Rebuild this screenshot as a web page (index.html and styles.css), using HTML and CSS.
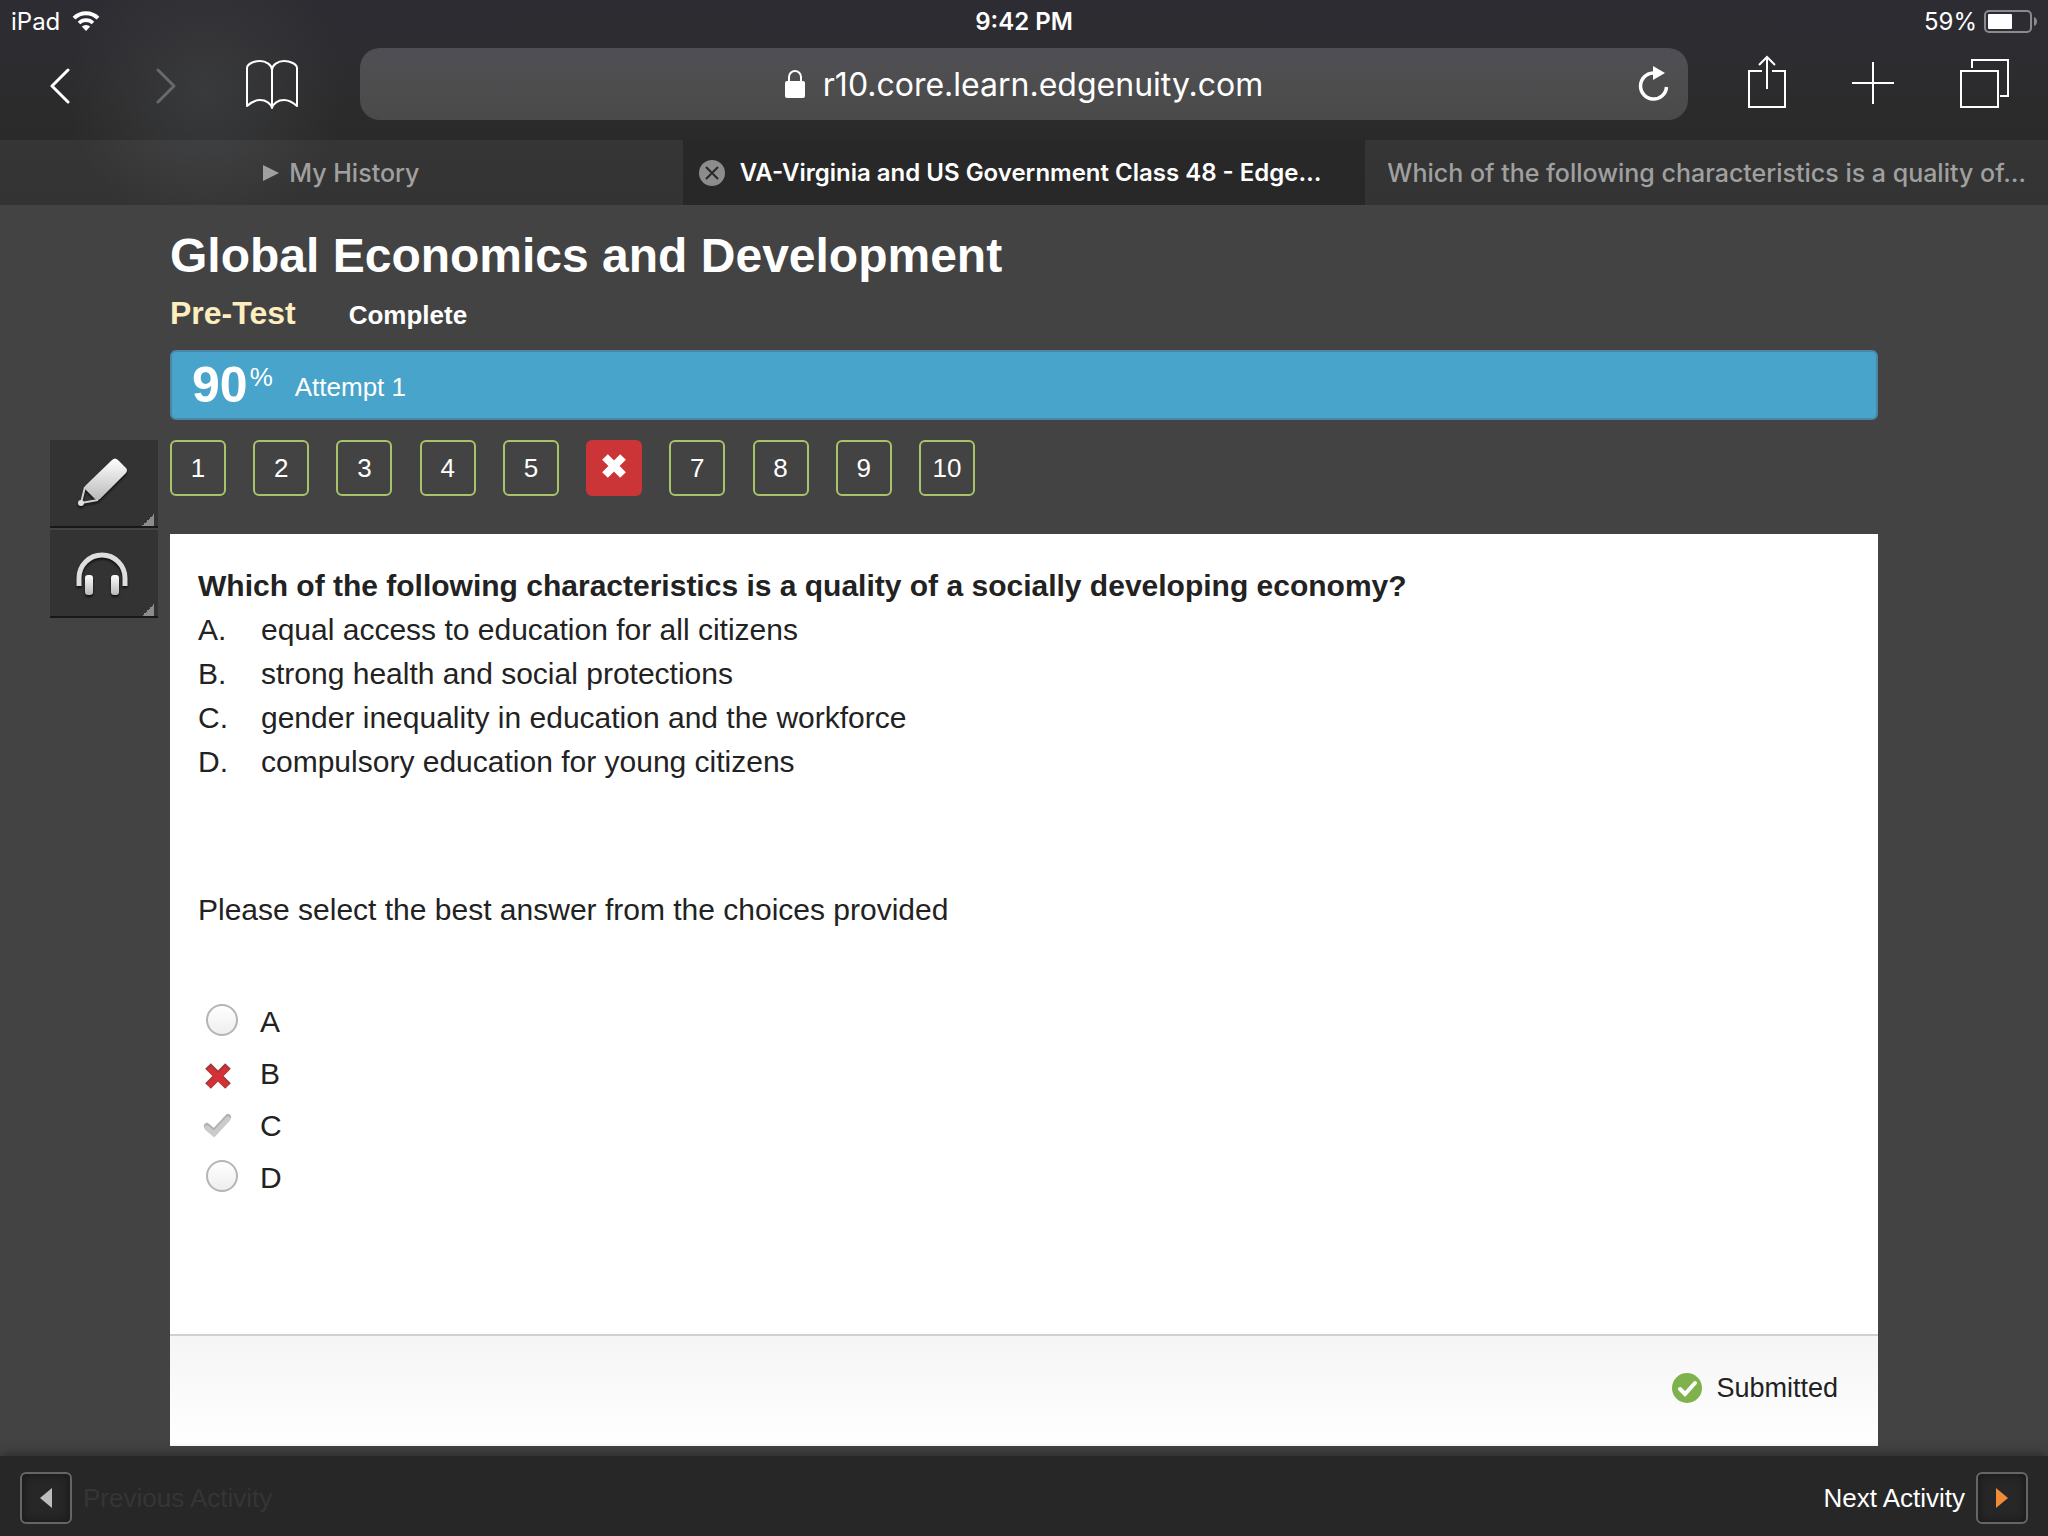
FILE: index.html
```html
<!DOCTYPE html>
<html lang="en">
<head>
<meta charset="utf-8">
<meta name="viewport" content="width=device-width, initial-scale=1">
<title>VA-Virginia and US Government Class 48 - Edgenuity</title>
<link rel="stylesheet" href="styles.css">
</head>
<body>
<header class="browser">
  <div class="status">
    <div class="status-side">
      <span>iPad</span>
      <svg width="28" height="20" viewBox="0 0 28 20" fill="none" aria-hidden="true">
        <path d="M2 7.200 A17 17 0 0 1 26 7.200" stroke="#fff" stroke-width="4"/>
        <path d="M7 12 A10 10 0 0 1 21 12" stroke="#fff" stroke-width="3.600"/>
        <path d="M14 20 L9.800 15.600 A6 6 0 0 1 18.200 15.600 Z" fill="#fff"/>
      </svg>
    </div>
    <time class="clock">9:42 PM</time>
    <div class="status-side status-right">
      <span>59%</span>
      <svg width="53" height="23" viewBox="0 0 53 23" aria-hidden="true">
        <rect x="1" y="1" width="46" height="21" rx="4" fill="none" stroke="#8b8a8e" stroke-width="2"/>
        <rect x="4" y="4" width="24" height="15" rx="1" fill="#fff"/>
        <path d="M50 7 Q53 8 53 11.500 Q53 15 50 16 Z" fill="#8b8a8e"/>
      </svg>
    </div>
  </div>
  <div class="toolbar">
    <nav class="history" aria-label="Browser history">
      <button class="tool" aria-label="Back"><svg width="20" height="40" viewBox="0 0 20 40" fill="none" stroke="#fff" stroke-width="3" stroke-linecap="round" stroke-linejoin="round"><path d="M18 6 L2 22 L18 38"/></svg></button>
      <button class="tool" aria-label="Forward" disabled><svg width="20" height="40" viewBox="0 0 20 40" fill="none" stroke="#68696b" stroke-width="3" stroke-linecap="round" stroke-linejoin="round"><path d="M2 6 L18 22 L2 38"/></svg></button>
      <button class="tool" aria-label="Bookmarks"><svg width="52" height="52" viewBox="0 -2 52 52" fill="none" stroke="#fff" stroke-width="2" stroke-linejoin="round"><path d="M26 48 V10 C26 5 20 1 14 1 C8 1 1 4 1 8 V46 C5 42.500 9 40 14 40 C20 40 25 43.500 26 48 C27 43.500 32 40 38 40 C43 40 47 42.500 51 46 V8 C51 4 44 1 38 1 C32 1 26 5 26 10"/></svg></button>
    </nav>
    <div class="address">
      <label class="address-text">
        <svg width="20" height="28" viewBox="0 0 20 28" aria-label="Secure"><rect x="0" y="11" width="20" height="17" rx="2" fill="#fff"/><path d="M4 12 V7 A6 6 0 0 1 16 7 V12" fill="none" stroke="#fff" stroke-width="2"/></svg>
        <input class="url" type="text" value="r10.core.learn.edgenuity.com" aria-label="Address">
      </label>
      <button class="tool" aria-label="Reload"><svg width="32" height="36" viewBox="0 0 32 36"><path d="M15 7 A13 13 0 1 0 28.500 21" fill="none" stroke="#fff" stroke-width="3.500"/><path d="M15 0 L27 7 L15 14 Z" fill="#fff"/></svg></button>
    </div>
    <div class="actions">
      <button class="tool" aria-label="Share"><svg width="38" height="58" viewBox="0 0 38 58" fill="none" stroke="#fff" stroke-width="2"><path d="M14 16 H1 V52 H37 V16 H24 M19 34 V2 M11 10 L19 2 L27 10"/></svg></button>
      <button class="tool" aria-label="New tab"><svg width="42" height="44" viewBox="0 0 42 44" stroke="#fff" stroke-width="2"><path d="M21 0 V42 M0 21 H42"/></svg></button>
      <button class="tool" aria-label="Show tabs"><svg width="50" height="50" viewBox="0 0 50 50" fill="none" stroke="#fff" stroke-width="2"><path d="M1 12 H38 V48 H1 Z M12 9 V1 H48 V37 H40"/></svg></button>
    </div>
  </div>
  <nav class="tabs" aria-label="Open tabs">
    <a class="tab" href="#history"><svg width="16" height="16" viewBox="0 0 16 16" fill="#a0a0a0" aria-hidden="true"><path d="M0 0 L16 8 L0 16 Z"/></svg>My History</a>
    <div class="tab tab-active">
      <button class="tool" aria-label="Close tab"><svg width="26" height="26" viewBox="0 0 26 26"><circle cx="13" cy="13" r="13" fill="#8c8c8c"/><path d="M7 7 L19 19 M19 7 L7 19" stroke="#282828" stroke-width="2"/></svg></button>
      <a href="#class" aria-current="page">VA-Virginia and US Government Class 48 - Edge…</a>
    </div>
    <a class="tab" href="#question">Which of the following characteristics is a quality of…</a>
  </nav>
</header>

<main class="lesson">
  <header class="lesson-head">
    <h1>Global Economics and Development</h1>
    <div class="subhead"><h2>Pre-Test</h2><span class="state">Complete</span></div>
    <div class="score"><strong>90</strong><span class="percent">%</span><span class="attempt">Attempt 1</span></div>
  </header>
  <aside class="tools">
    <button class="side-tool" aria-label="Highlighter">
      <svg width="52" height="52" viewBox="0 0 52 52">
        <defs><linearGradient id="metal" x1="0" y1="0" x2="0" y2="1"><stop offset="0" stop-color="#fff"/><stop offset="1" stop-color="#b9b9b9"/></linearGradient></defs>
        <path d="M34 3 Q37 0 40 3 L48 11 Q50 13 48 16 L22 42 Q20 44 17 42 L7 32 Q6 30 8 28 Z" fill="url(#metal)"/>
        <path d="M7 30 L3 46 L20 43" fill="none" stroke="#d0d0d0" stroke-width="2"/>
        <circle cx="3" cy="46" r="3" fill="#e0e0e0"/>
      </svg>
    </button>
    <button class="side-tool" aria-label="Read aloud">
      <svg width="52" height="52" viewBox="2 0 52 52">
        <path d="M3 39 V31 A23 23 0 0 1 49 31 V39" fill="none" stroke="#dedede" stroke-width="5"/>
        <rect x="9" y="28" width="8" height="20" rx="3" fill="url(#metal)"/>
        <rect x="35" y="28" width="8" height="20" rx="3" fill="url(#metal)"/>
      </svg>
    </button>
  </aside>
  <section class="work">
    <nav class="questions" aria-label="Questions">
      <button class="number">1</button>
      <button class="number">2</button>
      <button class="number">3</button>
      <button class="number">4</button>
      <button class="number">5</button>
      <button class="number number-wrong" aria-label="Question 6, incorrect"><svg width="26" height="26" viewBox="0 0 26 26"><path d="M4 4 L22 22 M22 4 L4 22" stroke="#fff" stroke-width="8"/></svg></button>
      <button class="number">7</button>
      <button class="number">8</button>
      <button class="number">9</button>
      <button class="number">10</button>
    </nav>
    <article class="card">
      <div class="card-body">
        <h3>Which of the following characteristics is a quality of a socially developing economy?</h3>
        <dl class="options">
          <dt>A.</dt><dd>equal access to education for all citizens</dd>
          <dt>B.</dt><dd>strong health and social protections</dd>
          <dt>C.</dt><dd>gender inequality in education and the workforce</dd>
          <dt>D.</dt><dd>compulsory education for young citizens</dd>
        </dl>
        <p class="prompt">Please select the best answer from the choices provided</p>
        <div class="answers" role="radiogroup" aria-label="Answer">
          <label class="answer"><input class="radio" type="radio" name="answer">A</label>
          <div class="answer"><svg class="mark" viewBox="0 0 32 32" role="img" aria-label="Incorrect"><path d="M2 10 L22 30 M22 10 L2 30" stroke="#9e3a3c" stroke-width="8"/><path d="M3 12 L21 30 M21 12 L3 30" stroke="#d33135" stroke-width="6"/></svg>B</div>
          <div class="answer"><svg class="mark" viewBox="0 0 32 32" role="img" aria-label="Correct"><path d="M1 18 L8 24 L22 9" fill="none" stroke="#b0b0b0" stroke-width="6" stroke-linecap="round"/><path d="M1 20 L8 26 L22 11" fill="none" stroke="#cbcbcb" stroke-width="5" stroke-linecap="round"/></svg>C</div>
          <label class="answer"><input class="radio" type="radio" name="answer">D</label>
        </div>
      </div>
      <footer class="card-foot">
        <svg width="30" height="30" viewBox="0 0 30 30" aria-hidden="true"><circle cx="15" cy="15" r="15" fill="#7fb24d"/><path d="M8 16 L13 21 L23 10" fill="none" stroke="#fff" stroke-width="4" stroke-linecap="round"/></svg>
        <span>Submitted</span>
      </footer>
    </article>
  </section>
</main>

<nav class="activity" aria-label="Activities">
  <div class="step">
    <button class="arrow" id="previous" disabled aria-label="Previous Activity"><svg width="12" height="20" viewBox="0 0 12 20" fill="#bdbdbd"><path d="M12 0 V20 L0 10 Z"/></svg></button>
    <label class="step-off" for="previous">Previous Activity</label>
  </div>
  <div class="step">
    <label for="next">Next Activity</label>
    <button class="arrow" id="next" aria-label="Next Activity"><svg width="12" height="20" viewBox="0 0 12 20" fill="#ee8c37"><path d="M0 0 V20 L12 10 Z"/></svg></button>
  </div>
</nav>
</body>
</html>
```
FILE: styles.css
```css
* { box-sizing: border-box; }

body {
  margin: 0;
  min-height: 100vh;
  display: flex;
  flex-direction: column;
  background: #434343;
  color: #fff;
  font-family: "Liberation Sans", Arial, sans-serif;
  font-size: 26px;
}

h1, h2, h3, p, dl, dd { margin: 0; }
button, input { font: inherit; color: inherit; }
button { padding: 0; border: 0; background: none; }
a { color: inherit; text-decoration: none; }
svg { display: block; flex: none; }

/* Browser chrome */
.browser {
  font-family: Inter, Roboto, sans-serif;
  background:
    radial-gradient(circle at 205px 90px, #393a3c 0, #393a3c00 140px),
    linear-gradient(#2d2c32 0, #2d2c31 50px, #2b2b2b 110px, #282828 205px);
}

.status {
  display: grid;
  grid-template-columns: 1fr auto 1fr;
  align-items: center;
  height: 42px;
  padding: 0 11px;
  font-size: 24px;
}
.status-side { display: flex; align-items: center; gap: 12px; }
.status-right { justify-content: flex-end; gap: 7px; }
.clock { font-weight: 600; }

.toolbar {
  display: flex;
  align-items: center;
  height: 98px;
  padding: 0 38px 14px 34px;
}
.history, .actions { display: flex; align-items: center; flex: none; }
.history { width: 326px; gap: 54px; }
.history .tool { width: 52px; justify-content: center; }
.actions { width: 322px; padding-left: 60px; justify-content: space-between; }
.tool { display: flex; align-items: center; }
.address {
  flex: 1;
  display: flex;
  align-items: center;
  height: 72px;
  padding: 0 18px 0 50px;
  border-radius: 20px;
  background: linear-gradient(#504e55, #4e4e50 40%, #4a4a4a);
}
.address-text { flex: 1; display: flex; align-items: center; justify-content: center; gap: 18px; }
.url {
  field-sizing: content;
  padding: 0;
  border: 0;
  background: none;
  font-size: 32px;
  outline: 0;
}

.tabs { display: grid; grid-template-columns: repeat(3, 1fr); height: 65px; }
.tab {
  display: flex;
  align-items: center;
  justify-content: center;
  gap: 10px;
  min-width: 0;
  background: #ffffff0e;
  color: #a0a0a0;
  font-size: 25px;
  font-weight: 500;
  white-space: nowrap;
}
.tab-active {
  justify-content: flex-start;
  gap: 15px;
  padding-left: 16px;
  background: #282828;
  color: #fff;
  font-size: 24px;
  font-weight: 600;
}

/* Lesson */
.lesson {
  flex: 1;
  display: grid;
  grid-template-columns: 108px 1fr;
  grid-template-rows: auto 1fr;
  column-gap: 12px;
  row-gap: 20px;
  padding: 23px 170px 10px 50px;
}
.lesson-head { grid-column: 2; }
h1 { font-size: 48px; line-height: 56px; }
.subhead { display: flex; align-items: baseline; gap: 53px; margin: 11px 0 17px; line-height: 36px; }
h2 { color: #fdeec0; font-size: 32px; }
.state { font-weight: bold; }
.score {
  display: flex;
  align-items: center;
  height: 70px;
  padding: 0 20px;
  border: 2px solid #4b87a5;
  border-radius: 6px;
  background: #48a4ca;
}
.score strong { font-size: 50px; }
.percent { align-self: flex-start; padding: 10px 22px 0 2px; }
.attempt { padding-top: 4px; }

.tools { display: flex; flex-direction: column; gap: 2px; }
.side-tool {
  display: flex;
  align-items: center;
  justify-content: center;
  height: 88px;
  border-bottom: 2px solid #181818;
  background: linear-gradient(135deg, #0000 50%, #8c8c8c 50%) right 4px bottom 0 / 12px 12px no-repeat #333;
}
.side-tool svg { overflow: visible; filter: drop-shadow(0 2px 1px #111); }

.work { display: flex; flex-direction: column; gap: 38px; }
.questions { display: flex; justify-content: space-between; width: 805px; max-width: 100%; }
.number {
  display: flex;
  align-items: center;
  justify-content: center;
  width: 56px;
  height: 56px;
  border: 2px solid #a7c46a;
  border-radius: 6px;
}
.number-wrong { padding-bottom: 4px; border-color: #cb3538; background: #cb3538; }

.card { flex: 1; display: flex; flex-direction: column; background: #fff; color: #222; }
.card-body { flex: 1; padding: 30px 28px; font-size: 30px; line-height: 44px; }
h3 { font-size: 30px; }
.options { display: grid; grid-template-columns: 63px 1fr; }
.prompt { margin: 104px 0 64px; }
.answer { display: flex; align-items: flex-start; gap: 22px; padding-left: 8px; line-height: 52px; }
.radio {
  appearance: none;
  width: 32px;
  height: 32px;
  margin: 8px 0 0;
  border: 2px solid #b5b5b5;
  border-radius: 50%;
  background: linear-gradient(#fff, #eee);
}
.mark { width: 32px; height: 32px; margin-top: 8px; overflow: visible; }
.card-foot {
  display: flex;
  align-items: center;
  justify-content: flex-end;
  gap: 14px;
  height: 112px;
  padding: 0 40px 6px;
  border-top: 2px solid #d0d0d0;
  background: linear-gradient(#f5f5f5, #fff);
  font-size: 27px;
}

/* Activity bar */
.activity {
  display: flex;
  align-items: center;
  justify-content: space-between;
  height: 80px;
  padding: 4px 20px 0;
  background: #272727;
  box-shadow: 0 0 12px #222;
}
.step { display: flex; align-items: center; gap: 11px; }
.step-off { color: #353535; }
.arrow {
  display: flex;
  align-items: center;
  justify-content: center;
  width: 52px;
  height: 52px;
  border: 2px solid #656565;
  border-radius: 6px;
  box-shadow: inset 0 0 10px #151515;
}
```
